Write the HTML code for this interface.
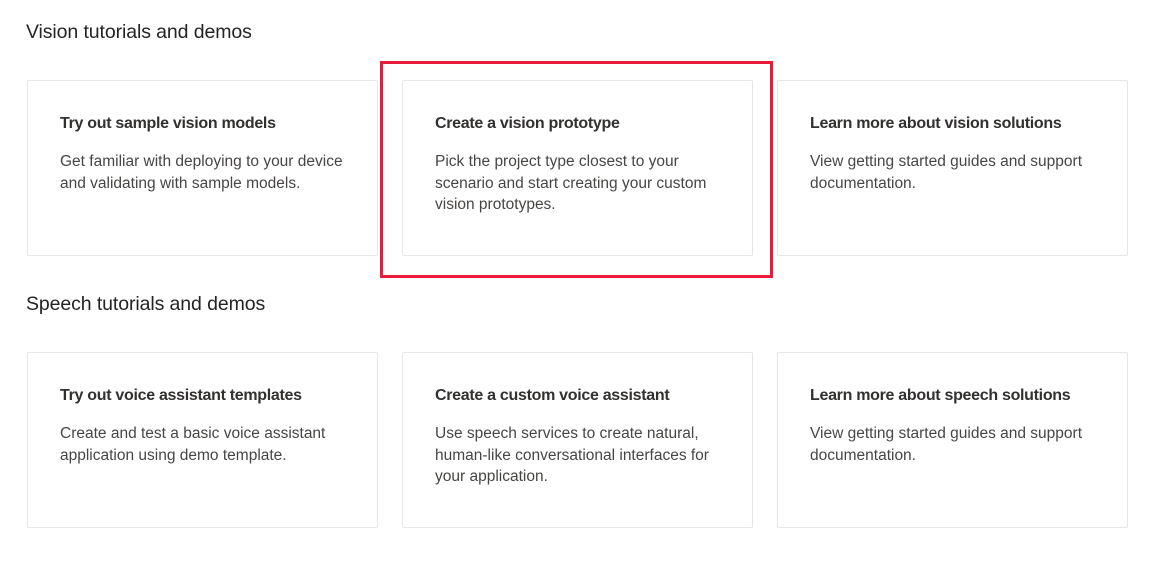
<!DOCTYPE html>
<html><head><meta charset="utf-8"><style>
body{margin:0;width:1159px;height:564px;background:#fff;font-family:"Liberation Sans",sans-serif;position:relative;overflow:hidden}
h2{position:absolute;left:26px;margin:0;font-size:19.5px;font-weight:normal;color:#252423;letter-spacing:-0.1px}
.card{position:absolute;width:351px;height:176px;border:1px solid #e6e6e6;border-radius:2px;box-sizing:border-box}
.card .t{position:absolute;left:32px;top:34px;font-size:16px;font-weight:bold;color:#323130;letter-spacing:-0.3px;white-space:nowrap}
.card .d{position:absolute;left:32px;top:70px;white-space:nowrap;font-size:15.5px;line-height:21.5px;color:#484644;letter-spacing:0}
.red{position:absolute;left:380px;top:61px;width:393px;height:217px;border:3px solid #e81c3a;box-sizing:border-box}
</style></head><body>
<h2 style="top:21px">Vision tutorials and demos</h2>
<div class="card" style="left:27px;top:80px"><div class="t">Try out sample vision models</div><div class="d">Get familiar with deploying to your device<br>and validating with sample models.</div></div>
<div class="card" style="left:402px;top:80px"><div class="t">Create a vision prototype</div><div class="d">Pick the project type closest to your<br>scenario and start creating your custom<br>vision prototypes.</div></div>
<div class="card" style="left:777px;top:80px"><div class="t">Learn more about vision solutions</div><div class="d">View getting started guides and support<br>documentation.</div></div>
<div class="red"></div>
<h2 style="top:293px">Speech tutorials and demos</h2>
<div class="card" style="left:27px;top:352px"><div class="t">Try out voice assistant templates</div><div class="d">Create and test a basic voice assistant<br>application using demo template.</div></div>
<div class="card" style="left:402px;top:352px"><div class="t">Create a custom voice assistant</div><div class="d">Use speech services to create natural,<br>human-like conversational interfaces for<br>your application.</div></div>
<div class="card" style="left:777px;top:352px"><div class="t">Learn more about speech solutions</div><div class="d">View getting started guides and support<br>documentation.</div></div>
</body></html>
